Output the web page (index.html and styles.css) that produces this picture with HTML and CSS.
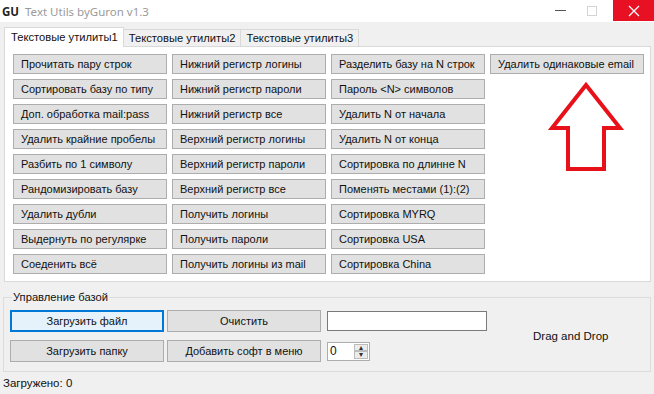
FILE: index.html
```html
<!DOCTYPE html>
<html lang="ru">
<head>
  <meta charset="UTF-8" />
  <title>Text Utils byGuron v1.3</title>
  <link rel="stylesheet" href="styles.css">
</head>
<body>
  <div class="window">
    <div class="titlebar">
      <span class="logo">GU</span>
      <span class="title">Text Utils byGuron v1.3</span>
      <div class="wincontrols">
        <span class="wbtn minimize"><span class="dash"></span></span>
        <span class="wbtn maximize"><span class="box"></span></span>
        <span class="wbtn close">
          <svg width="12" height="12" viewBox="0 0 12 12"><path d="M1 1 L11 11 M11 1 L1 11" stroke="#fff" stroke-width="1.3"/></svg>
        </span>
      </div>
    </div>

    <div class="tabs">
      <div class="tab-headers">
        <div class="tab active">Текстовые утилиты1</div>
        <div class="tab">Текстовые утилиты2</div>
        <div class="tab">Текстовые утилиты3</div>
      </div>
      <div class="tab-page">
        <div class="grid">
          <button class="btn">Прочитать пару строк</button>
          <button class="btn">Нижний регистр логины</button>
          <button class="btn">Разделить базу на N строк</button>
          <button class="btn">Удалить одинаковые email</button>

          <button class="btn">Сортировать базу по типу</button>
          <button class="btn">Нижний регистр пароли</button>
          <button class="btn">Пароль &lt;N&gt; символов</button>
          <span></span>

          <button class="btn">Доп. обработка mail:pass</button>
          <button class="btn">Нижний регистр все</button>
          <button class="btn">Удалить N от начала</button>
          <span></span>

          <button class="btn">Удалить крайние пробелы</button>
          <button class="btn">Верхний регистр логины</button>
          <button class="btn">Удалить N от конца</button>
          <span></span>

          <button class="btn">Разбить по 1 символу</button>
          <button class="btn">Верхний регистр пароли</button>
          <button class="btn">Сортировка по длинне N</button>
          <span></span>

          <button class="btn">Рандомизировать базу</button>
          <button class="btn">Верхний регистр все</button>
          <button class="btn">Поменять местами (1):(2)</button>
          <span></span>

          <button class="btn">Удалить дубли</button>
          <button class="btn">Получить логины</button>
          <button class="btn">Сортировка MYRQ</button>
          <span></span>

          <button class="btn">Выдернуть по регулярке</button>
          <button class="btn">Получить пароли</button>
          <button class="btn">Сортировка USA</button>
          <span></span>

          <button class="btn">Соеденить всё</button>
          <button class="btn">Получить логины из mail</button>
          <button class="btn">Сортировка China</button>
          <span></span>
        </div>

        <svg class="arrow" width="80" height="100" viewBox="0 0 80 100">
          <polygon points="40,4 74,47 58,47 58,88 22,88 22,47 6,47" fill="none" stroke="#e8111a" stroke-width="4" stroke-linejoin="miter"/>
        </svg>
      </div>
    </div>

    <fieldset class="group">
      <legend>Управление базой</legend>
      <div class="group-body">
        <div class="group-grid">
          <button class="btn wide focused">Загрузить файл</button>
          <button class="btn wide">Очистить</button>
          <input class="textbox" type="text">
          <button class="btn wide">Загрузить папку</button>
          <button class="btn wide">Добавить софт в меню</button>
          <div class="updown">
            <span class="updown-value">0</span>
            <span class="updown-arrows">
              <span class="ud-btn">&#9652;</span>
              <span class="ud-btn">&#9662;</span>
            </span>
          </div>
        </div>
        <div class="dropzone">Drag and Drop</div>
      </div>
    </fieldset>

    <div class="statusline">Загружено: 0</div>
  </div>
</body>
</html>
```

FILE: styles.css
```css
body {
  margin: 0;
  background: #f0f0f0;
  font-family: "Liberation Sans", Arial, sans-serif;
  font-size: 11px;
  color: #111;
}
.window {
  width: 654px;
  height: 394px;
  overflow: hidden;
}
.titlebar {
  height: 22px;
  background: #fff;
  display: flex;
  align-items: center;
  font-family: "Noto Sans", "Open Sans", sans-serif;
  font-size: 11.5px;
  position: relative;
}
.logo {
  font-weight: bold;
  color: #222;
  margin-left: 2px;
  margin-right: 6px;
}
.title {
  color: #9a9a9a;
}
.wincontrols {
  margin-left: auto;
  display: flex;
  height: 22px;
}
.wbtn {
  width: 28px;
  height: 21px;
  display: flex;
  align-items: center;
  justify-content: center;
}
.wbtn.minimize {
  width: 34px;
}
.dash {
  width: 11px;
  height: 1px;
  background: #555;
}
.wbtn.maximize {
  width: 30px;
  margin-right: 6px;
}
.box {
  width: 8px;
  height: 8px;
  border: 1px solid #d4d4d4;
}
.wbtn.close {
  width: 41px;
  background: #e81123;
}

.tabs {
  margin: 5px 3px 0 4px;
}
.tab-headers {
  display: flex;
  align-items: flex-end;
  height: 19px;
  position: relative;
  z-index: 1;
}
.tab {
  height: 16px;
  padding: 0 5px;
  border: 1px solid #d9d9d9;
  border-bottom: none;
  background: #f0f0f0;
  font-size: 11.2px;
  line-height: 16px;
  margin-left: -1px;
}
.tab.active {
  height: 19px;
  line-height: 18px;
  background: #fff;
  margin-left: 0;
  margin-bottom: -1px;
  padding: 0 5px 0 6px;
}
.tab-page {
  position: relative;
  background: #fff;
  border: 1px solid #d9d9d9;
  height: 236px;
  box-sizing: border-box;
  padding: 7px 0 0 8px;
}
.grid {
  display: grid;
  grid-template-columns: 154px 154px 154px 154px;
  grid-auto-rows: 20px;
  column-gap: 5px;
  row-gap: 5px;
}
.btn {
  font-family: "Liberation Sans", Arial, sans-serif;
  font-size: 11px;
  background: #e1e1e1;
  border: 1px solid #adadad;
  color: #111;
  text-align: left;
  padding: 0 0 1px 7px;
  margin: 0;
  height: 20px;
  white-space: nowrap;
}
.arrow {
  position: absolute;
  left: 541px;
  top: 34px;
}

.group {
  margin: 9px 3px 0 3px;
  padding: 0 0 5px 6px;
  border: 1px solid #dcdcdc;
  border-radius: 0;
  height: 81px;
  box-sizing: border-box;
}
.group legend {
  font-size: 11.2px;
  padding: 0 1px;
  margin-left: 2px;
  color: #111;
}
.group-body {
  display: flex;
  align-items: center;
  margin-top: 7px;
}
.group-grid {
  display: grid;
  grid-template-columns: 154px 154px 160px;
  grid-auto-rows: 22px;
  column-gap: 3px;
  row-gap: 8px;
  align-items: center;
}
.btn.wide {
  height: 22px;
  text-align: center;
  padding: 0;
}
.btn.focused {
  border: 2px solid #0078d7;
  background: #e5f1fb;
}
.textbox {
  margin: 0 0 0 3px;
  width: 160px;
  height: 20px;
  box-sizing: border-box;
  border: 1px solid #7a7a7a;
  background: #fff;
}
.updown {
  margin-left: 3px;
  width: 43px;
  height: 19px;
  box-sizing: border-box;
  border: 1px solid #adadad;
  background: #fff;
  display: flex;
  align-items: center;
  justify-content: space-between;
  font-size: 12px;
}
.updown-value {
  padding-left: 2px;
}
.updown-arrows {
  display: flex;
  flex-direction: column;
  width: 14px;
  height: 15px;
  margin-right: 1px;
}
.ud-btn {
  flex: 1;
  background: #ececec;
  border: 1px solid #bcbcbc;
  font-size: 8px;
  line-height: 6px;
  text-align: center;
  color: #333;
  overflow: hidden;
}
.dropzone {
  margin-left: 49px;
  font-size: 11.5px;
  color: #111;
}
.statusline {
  margin: 5px 0 0 3px;
  font-size: 11.5px;
}
```
